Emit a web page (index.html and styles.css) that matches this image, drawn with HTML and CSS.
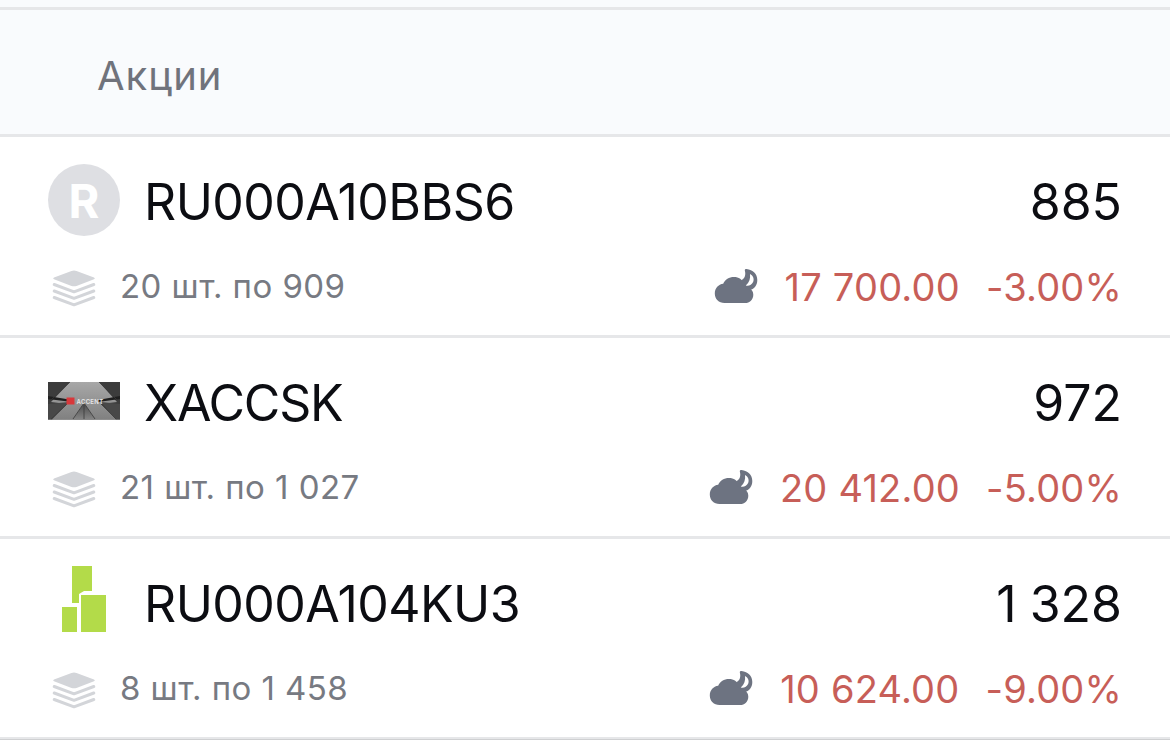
FILE: index.html
```html
<!DOCTYPE html>
<html lang="ru">
  <head>
    <meta charset="UTF-8" />
    <meta name="viewport" content="width=device-width, initial-scale=1.0" />
    <title>Портфель - Акции</title>
    <link rel="stylesheet" href="styles.css">
  </head>
  <body>
    <svg class="sprite" aria-hidden="true">
      <symbol id="icon-stack" viewBox="0 0 44 38">
        <path d="M2 8.500 19.500 1.900q2.500-.9 5 0L42 8.500q1.800.9 0 1.800L24.500 16.900q-2.500.9-5 0L2 10.300q-1.800-.9 0-1.800z" fill="currentColor" />
        <path d="M2.200 15.500 22 22.800 41.800 15.500M2.200 22 22 29.300 41.800 22M2.200 28.500 22 35.800 41.800 28.500" fill="none" stroke="currentColor" stroke-width="3" stroke-linecap="round" stroke-linejoin="round" />
      </symbol>
      <symbol id="icon-cloud" viewBox="0 0 44 36">
        <path d="M10.500 34C4.800 34 .8 30 .8 24.500c0-5.200 3.700-9.200 8.400-9.700C11 10.500 15 8 20 8c4.800 0 8.400 2.500 10 6.800.8 2.500 2.800 3.200 5 4.200 2.800 1.200 4.300 3.700 4.300 6.700 0 4.700-3.500 8.300-8.300 8.300z" fill="currentColor" />
        <path fill-rule="evenodd" d="M30.800 1.500Q30.500 0 32.500.1C39 .8 43.300 5 43.300 11c0 5.200-3 9.500-8 10.200L27.500 15l-.8-3.200c4.300-2.300 5.300-6 4.100-10.300zM36 5c.6 4.500-.6 8.300-4.200 11.600 3.200.7 6-.8 7.300-3.500C40.400 10 39.300 6.800 36 5z" fill="currentColor" />
      </symbol>
    </svg>

    <div class="topbar"></div>
    <h2 class="section-title">Акции</h2>

    <ul class="list">
      <li class="item">
        <div class="main">
          <span class="logo logo-letter">R</span>
          <span class="ticker">RU000A10BBS6</span>
          <span class="price">885</span>
        </div>
        <div class="details">
          <svg class="stack"><use href="#icon-stack" /></svg>
          <span class="amount">20 шт. по 909</span>
          <svg class="cloud"><use href="#icon-cloud" /></svg>
          <span class="total">17 700.00</span>
          <span class="change">-3.00%</span>
        </div>
      </li>

      <li class="item">
        <div class="main">
          <svg class="logo" viewBox="0 0 72 72">
            <defs>
              <linearGradient id="sky" x1="0" y1="0" x2="0" y2="1">
                <stop offset="0" stop-color="#a8a8a8" />
                <stop offset="1" stop-color="#808080" />
              </linearGradient>
              <linearGradient id="tower" x1="0" y1="0" x2="0" y2="1">
                <stop offset="0" stop-color="#4a4a4a" />
                <stop offset="1" stop-color="#858585" />
              </linearGradient>
            </defs>
            <path d="M0 17h72v37.500H0z" fill="#3c3c3c" />
            <path d="M22 17h29l18 20-16 2 16 15.500H3L19 39 3 37z" fill="url(#sky)" />
            <path d="M0 31l24 4v2L0 34zM72 31l-22 4v2l22-3z" fill="#1f1f1f" />
            <path d="M0 39l21-2L4 54.500H0zM72 39l-19-2 15 17.500h4z" fill="#484848" />
            <path d="M36 38 25 54.500h22z" fill="url(#tower)" />
            <path d="M19 39 3 54M53 39l15 15M36 40v14M36 38 25 54M36 38l11 16M2 36l20-19M70 36 51 17" fill="none" stroke="#3a3a3a" stroke-width=".8" />
            <path d="M18.500 32.500h8v7h-8z" fill="#d8383b" />
            <text class="logo-text" x="28.500" y="38.500">ACCENT</text>
          </svg>
          <span class="ticker ticker-tight">XACCSK</span>
          <span class="price">972</span>
        </div>
        <div class="details">
          <svg class="stack"><use href="#icon-stack" /></svg>
          <span class="amount">21 шт. по 1 027</span>
          <svg class="cloud"><use href="#icon-cloud" /></svg>
          <span class="total">20 412.00</span>
          <span class="change">-5.00%</span>
        </div>
      </li>

      <li class="item">
        <div class="main">
          <svg class="logo" viewBox="0 0 72 72">
            <path d="M24 0h20v25h-8l-5 3v9h-7zM14 41h15v25H14zM33 29h25v37H33z" fill="#b3db49" />
          </svg>
          <span class="ticker">RU000A104KU3</span>
          <span class="price">1 328</span>
        </div>
        <div class="details">
          <svg class="stack"><use href="#icon-stack" /></svg>
          <span class="amount">8 шт. по 1 458</span>
          <svg class="cloud"><use href="#icon-cloud" /></svg>
          <span class="total">10 624.00</span>
          <span class="change">-9.00%</span>
        </div>
      </li>
    </ul>
  </body>
</html>
```
FILE: styles.css
```css
* {
  margin: 0;
  padding: 0;
  box-sizing: border-box;
}

body {
  font-family: Inter, 'Liberation Sans', sans-serif;
  background: #fff;
  color: #0c0d12;
  overflow: hidden;
}

.sprite {
  display: none;
}

.topbar {
  height: 10px;
  background: #f9fbfd;
  border-bottom: 3px solid #e6e7e9;
}

.section-title {
  height: 127px;
  padding: 4px 0 0 97px;
  background: #f9fbfd;
  border-bottom: 3px solid #e6e7e9;
  color: #70737c;
  font-size: 40px;
  font-weight: 400;
  line-height: 124px;
  letter-spacing: 1px;
}

.list {
  list-style: none;
  border-bottom: 1px solid #cfd0d2;
}

.item {
  height: 201px;
  padding: 27px 48px 0 48px;
  border-bottom: 3px solid #e6e7e9;
}

.item:last-child {
  height: 200px;
  border-bottom-width: 2px;
}

.main {
  display: flex;
  align-items: center;
  height: 72px;
}

.logo {
  width: 72px;
  height: 72px;
  margin-right: 24px;
}

.logo-letter {
  border-radius: 50%;
  background: #dedfe3;
  color: #fff;
  font-size: 47px;
  font-weight: 700;
  line-height: 73px;
  text-align: center;
}

.logo-text {
  fill: #e8e8e8;
  font-size: 6px;
  font-weight: 600;
  letter-spacing: 0.3px;
}

.ticker,
.price {
  padding-top: 4px;
  font-size: 50px;
  line-height: 72px;
}

.ticker {
  letter-spacing: -0.55px;
}

.ticker-tight {
  letter-spacing: -1.2px;
}

.price {
  margin-left: auto;
  word-spacing: -1px;
}

.details {
  display: flex;
  align-items: center;
  height: 46px;
  margin-top: 28px;
  white-space: nowrap;
}

.stack {
  width: 44px;
  height: 38px;
  margin: 2px 24px 0 4px;
  color: #d3d5d9;
}

.amount {
  padding-bottom: 2px;
  color: #777a82;
  font-size: 33px;
  letter-spacing: 0.45px;
}

.cloud {
  width: 44px;
  height: 36px;
  margin-left: auto;
  color: #6d7381;
}

.total,
.change {
  color: #c75e58;
  font-size: 38px;
  letter-spacing: 0.2px;
}

.total {
  margin-left: 27px;
}

.change {
  margin-left: 26px;
}
```
